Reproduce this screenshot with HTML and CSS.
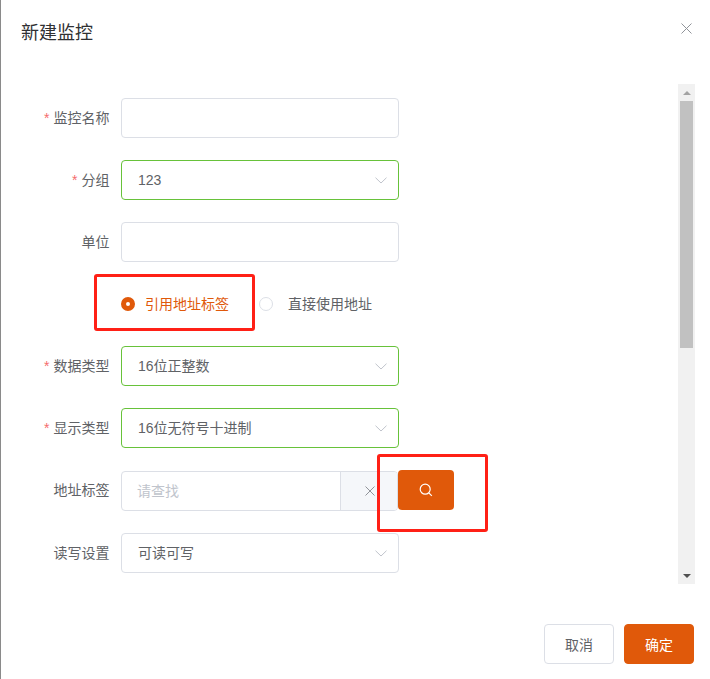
FILE: index.html
```html
<!DOCTYPE html>
<html lang="zh-CN">
<head>
<meta charset="utf-8">
<title>新建监控</title>
<link rel="stylesheet" href="styles.css">
</head>
<body>
<div class="dialog">
  <header class="header">
    <h1 class="title">新建监控</h1>
    <svg class="close" width="11" height="11" viewBox="0 0 11 11"><path d="M.5.500l10 10M10.500.500l-10 10" fill="none" stroke="#909399" stroke-width="1"/></svg>
  </header>
  <div class="scroll">
    <form class="form">
      <div class="row">
        <label class="label"><span class="req">*</span>监控名称</label>
        <div class="control"></div>
      </div>
      <div class="row">
        <label class="label"><span class="req">*</span>分组</label>
        <div class="control ok">123
          <svg class="chev" width="12" height="7" viewBox="0 0 12 7"><path d="M.5.7L6 6l5.500-5.300" fill="none" stroke="#c0c4cc"/></svg>
        </div>
      </div>
      <div class="row">
        <label class="label">单位</label>
        <div class="control"></div>
      </div>
      <div class="row radios">
        <span class="radio on"></span><span class="radio-text active">引用地址标签</span>
        <span class="radio"></span><span class="radio-text">直接使用地址</span>
      </div>
      <div class="row">
        <label class="label"><span class="req">*</span>数据类型</label>
        <div class="control ok">16位正整数
          <svg class="chev" width="12" height="7" viewBox="0 0 12 7"><path d="M.5.7L6 6l5.500-5.300" fill="none" stroke="#c0c4cc"/></svg>
        </div>
      </div>
      <div class="row">
        <label class="label"><span class="req">*</span>显示类型</label>
        <div class="control ok">16位无符号十进制
          <svg class="chev" width="12" height="7" viewBox="0 0 12 7"><path d="M.5.7L6 6l5.500-5.300" fill="none" stroke="#c0c4cc"/></svg>
        </div>
      </div>
      <div class="row">
        <label class="label">地址标签</label>
        <div class="group">
          <div class="group-input">请查找</div>
          <div class="group-append">
            <svg width="10" height="10" viewBox="0 0 10 10"><path d="M.5.500l9 9M9.500.500l-9 9" fill="none" stroke="#909399"/></svg>
          </div>
        </div>
        <button type="button" class="search">
          <svg width="14" height="14" viewBox="0 0 14 14"><circle cx="6.200" cy="6.200" r="5" fill="none" stroke="#fff" stroke-width="1.200"/><path d="M9.800 9.800l3 3" stroke="#fff" stroke-width="1.200" fill="none"/></svg>
        </button>
      </div>
      <div class="row">
        <label class="label">读写设置</label>
        <div class="control">可读可写
          <svg class="chev" width="12" height="7" viewBox="0 0 12 7"><path d="M.5.7L6 6l5.500-5.300" fill="none" stroke="#c0c4cc"/></svg>
        </div>
      </div>
    </form>
    <div class="scrollbar">
      <div class="arrow"><span class="tri up"></span></div>
      <div class="thumb"></div>
      <div class="arrow end"><span class="tri down"></span></div>
    </div>
  </div>
  <footer class="footer">
    <button type="button" class="btn">取消</button>
    <button type="button" class="btn primary">确定</button>
  </footer>
  <div class="mark mark-radio"></div>
  <div class="mark mark-search"></div>
</div>
</body>
</html>
```
FILE: styles.css
```css
* { box-sizing: border-box; }
html, body { margin: 0; padding: 0; background: #fff; }
body { font-family: "Liberation Sans", "Noto Sans CJK SC", sans-serif; font-size: 14px; color: #606266; }
.dialog { position: relative; width: 710px; height: 679px; border-left: 1px solid #8a8a8a; overflow: hidden; background: #fff; }
.header { display: flex; justify-content: space-between; align-items: flex-start; height: 84px; padding: 21px 18px 0 20px; }
.title { margin: 0; font-size: 18px; line-height: 24px; font-weight: 400; color: #303133; }
.close { margin-top: 2px; }
.scroll { display: flex; height: 500px; padding-right: 15px; }
.form { flex: 1; padding-top: 14px; padding-left: 20px; }
.row { display: flex; align-items: flex-start; margin-bottom: 22px; }
.label { width: 88.5px; margin-right: 11.5px; line-height: 40px; text-align: right; flex: none; }
.req { color: #f56c6c; margin-right: 4px; }
.control { position: relative; width: 278px; height: 40px; line-height: 38px; padding-left: 16px; border: 1px solid #dcdfe6; border-radius: 4px; background: #fff; }
.control.ok { border-color: #67c23a; }
.chev { position: absolute; right: 11px; top: 16px; }
.radios { align-items: center; height: 40px; padding-left: 100px; }
.radio { width: 14px; height: 14px; border: 1px solid #dcdfe6; border-radius: 50%; flex: none; margin-right: 10px; background: #fff; }
.radio.on { border: 5px solid #e0590a; }
.radio-text { margin-right: 30px; line-height: 40px; }
.radio + .radio-text + .radio { margin-right: 15px; }
.radio-text.active { color: #e0590a; }
.group { display: flex; width: 277px; height: 40px; margin-top: 1px; border: 1px solid #dcdfe6; border-radius: 4px; flex: none; overflow: hidden; }
.group-input { width: 218px; padding-left: 15px; line-height: 38px; color: #c0c4cc; }
.group-append { flex: 1; display: flex; align-items: center; justify-content: center; background: #f5f7fa; border-left: 1px solid #dcdfe6; padding-left: 1px; }
.row:has(.group) { margin-bottom: 22px; height: 41px; }
.search { display: flex; align-items: center; justify-content: center; width: 56px; height: 40px; padding: 0; margin-left: 0; border: 0; border-radius: 4px; background: #e0590a; position: relative; }
.scrollbar { display: flex; flex-direction: column; width: 17px; flex: none; background: #f1f1f1; padding: 0 2px; }
.arrow { height: 17px; display: flex; align-items: center; justify-content: center; flex: none; margin: 0 -2px; }
.arrow.end { margin-top: auto; }
.thumb { height: 247px; background: #c1c1c1; flex: none; }
.tri { width: 0; height: 0; border-left: 4px solid transparent; border-right: 4px solid transparent; }
.tri.up { border-bottom: 4px solid #a3a3a3; }
.tri.down { border-top: 4px solid #505050; }
.footer { display: flex; justify-content: flex-end; gap: 10px; padding: 40px 16px 0 0; }
.btn { width: 70px; height: 40px; padding: 0; font: inherit; color: #606266; background: #fff; border: 1px solid #dcdfe6; border-radius: 4px; }
.btn.primary { color: #fff; background: #e0590a; border-color: #e0590a; }
.mark { position: absolute; border: 3px solid #ff2016; border-radius: 3px; pointer-events: none; }
.mark-radio { left: 93px; top: 274px; width: 161px; height: 57px; }
.mark-search { left: 376px; top: 454px; width: 111px; height: 78px; }
```
